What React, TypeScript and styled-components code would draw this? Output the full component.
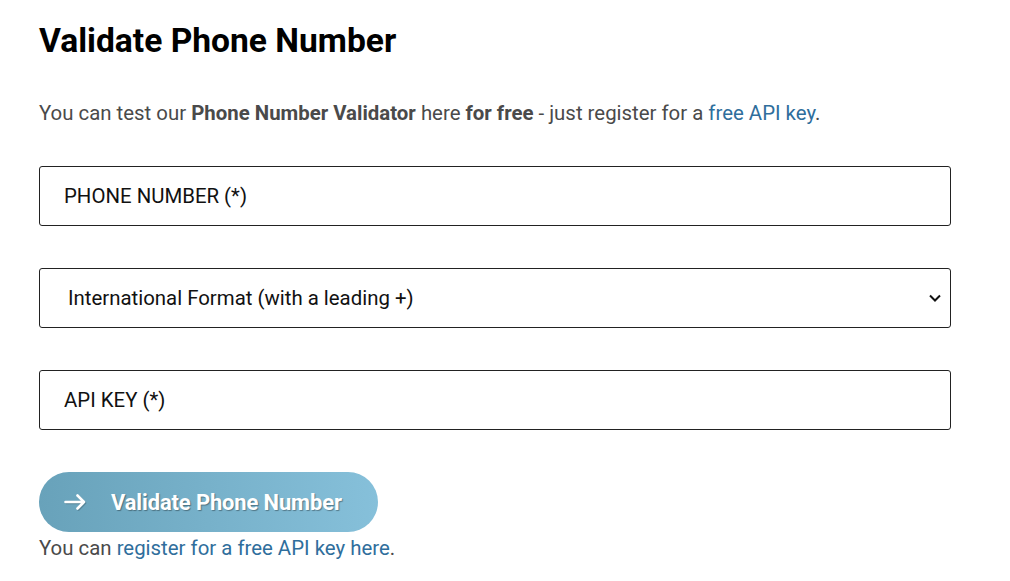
import styled, { createGlobalStyle } from 'styled-components';

const GlobalStyle = createGlobalStyle`
  body {
    margin: 0;
    background: #ffffff;
    font-family: Roboto, "Liberation Sans", sans-serif;
  }
`;

const Page = styled.main`
  padding: 22px 59px 0 39px;
  width: 912px;
`;

const Title = styled.h1`
  font-size: 33.6px;
  font-weight: 700;
  color: #000;
  margin: 0 0 41px;
  line-height: 38px;
`;

const Intro = styled.p`
  font-size: 20.4px;
  color: #4a4a4a;
  margin: 0 0 41px;
  line-height: 24px;
`;

const Strong = styled.strong`
  font-weight: 700;
`;

const Link = styled.a`
  color: #2f6e9c;
  text-decoration: none;
`;

const Form = styled.form`
  display: flex;
  flex-direction: column;
  gap: 42px;
`;

const Field = styled.input`
  box-sizing: border-box;
  width: 100%;
  height: 60px;
  padding: 0 24px;
  border: 1px solid #222;
  border-radius: 3px;
  font-family: Roboto, "Liberation Sans", sans-serif;
  font-size: 20.4px;
  color: #111;
  background: #fff;
  outline: none;

  &::placeholder {
    color: #111;
  }
`;

const SelectWrap = styled.div`
  position: relative;
`;

const Select = styled.select`
  box-sizing: border-box;
  width: 100%;
  height: 60px;
  padding: 0 40px 0 28px;
  border: 1px solid #222;
  border-radius: 3px;
  font-family: Roboto, "Liberation Sans", sans-serif;
  font-size: 20.4px;
  color: #111;
  background: #fff;
  appearance: none;
  outline: none;
`;

const Chevron = styled.svg`
  position: absolute;
  right: 9px;
  top: 25px;
  pointer-events: none;
`;

const Actions = styled.div`
  display: flex;
  flex-direction: column;
  align-items: flex-start;
`;

const SubmitButton = styled.button`
  display: flex;
  align-items: center;
  gap: 25px;
  height: 60px;
  width: 339px;
  padding: 0 0 0 25px;
  border: none;
  border-radius: 30px;
  background: linear-gradient(90deg, #68a2ba 0%, #86c0da 100%);
  color: #fff;
  font-family: Roboto, "Liberation Sans", sans-serif;
  font-size: 21.9px;
  font-weight: 700;
  letter-spacing: -0.1px;
  text-shadow: 1px 1px 1px rgba(0, 0, 0, 0.35);
  cursor: pointer;

  svg {
    flex: none;
    filter: drop-shadow(1px 1px 0 rgba(0, 0, 0, 0.2));
  }
`;

const Note = styled.p`
  font-size: 20.4px;
  color: #4a4a4a;
  margin: 4px 0 0;
  line-height: 24px;
`;

export default function App() {
  return (
    <>
      <GlobalStyle />
      <Page>
        <Title>Validate Phone Number</Title>
        <Intro>
          You can test our <Strong>Phone Number Validator</Strong> here <Strong>for free</Strong> - just
          register for a <Link href="#">free API key</Link>.
        </Intro>
        <Form onSubmit={(e) => e.preventDefault()}>
          <Field type="text" placeholder="PHONE NUMBER (*)" />
          <SelectWrap>
            <Select defaultValue="international">
              <option value="international">International Format (with a leading +)</option>
              <option value="national">National Format</option>
            </Select>
            <Chevron width="14" height="10" viewBox="0 0 14 10">
              <path d="M2 2.5 L7 7.5 L12 2.5" fill="none" stroke="#111" strokeWidth="2" />
            </Chevron>
          </SelectWrap>
          <Field type="text" placeholder="API KEY (*)" />
          <Actions>
            <SubmitButton type="submit">
              <svg width="22" height="16" viewBox="0 0 22 16">
                <path
                  d="M1.5 8 H20 M13.5 1.5 L20 8 L13.5 14.5"
                  fill="none"
                  stroke="#fff"
                  strokeWidth="2.6"
                  strokeLinecap="round"
                  strokeLinejoin="round"
                />
              </svg>
              Validate Phone Number
            </SubmitButton>
            <Note>
              You can <Link href="#">register for a free API key here</Link>.
            </Note>
          </Actions>
        </Form>
      </Page>
    </>
  );
}
